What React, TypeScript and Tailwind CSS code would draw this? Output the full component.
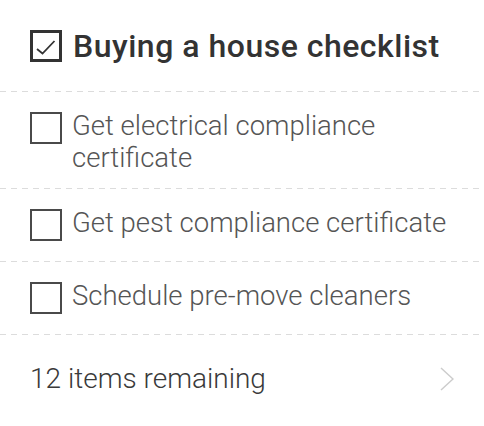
import React from 'react';

const items = [
  'Get electrical compliance certificate',
  'Get pest compliance certificate',
  'Schedule pre-move cleaners',
];

const Dashed = () => (
  <div className="h-px w-full bg-[linear-gradient(to_right,#dcdcdc_6px,transparent_6px)] bg-[length:11px_1px] bg-repeat-x" />
);

const Box: React.FC<{ checked?: boolean }> = ({ checked }) =>
  checked ? (
    <div className="relative w-8 h-8 shrink-0 border-[3px] border-[#333]">
      <svg className="absolute -inset-[3px] w-8 h-8" viewBox="0 0 32 32" fill="none" stroke="#333" strokeWidth={1.8}>
        <path d="M7 19l5.5 4.5L24.5 11" />
      </svg>
    </div>
  ) : (
    <div className="w-8 h-8 shrink-0 border-2 border-[#4a4a4a]" />
  );

const App: React.FC = () => {
  return (
    <div className="w-[484px] h-[426px] bg-white font-['Roboto','Liberation_Sans',Arial,sans-serif] overflow-hidden">
      {/* Title */}
      <div className="flex items-center gap-[11px] px-[30px] pt-[30px] pb-[29px]">
        <Box checked />
        <h1 className="text-[32px] leading-8 font-medium tracking-[0.5px] text-[#333]">Buying a house checklist</h1>
      </div>
      <Dashed />

      {items.map((item) => (
        <React.Fragment key={item}>
          <div className="flex items-start gap-[10px] px-[30px] py-[20px]">
            <Box />
            <span className="text-[27.5px] leading-8 font-light text-[#555] -mt-[2px] -mb-[6px]">{item}</span>
          </div>
          <Dashed />
        </React.Fragment>
      ))}

      {/* Footer */}
      <div className="flex items-center justify-between px-[30px] pt-[28px]">
        <span className="text-[28px] leading-8 font-light text-[#3a3a3a]">12 items remaining</span>
        <svg className="w-[14px] h-6" viewBox="0 0 14 24" fill="none" stroke="#cccccc" strokeWidth={1.5}>
          <path d="M1 1l12 11L1 23" />
        </svg>
      </div>
    </div>
  );
};

export default App;
